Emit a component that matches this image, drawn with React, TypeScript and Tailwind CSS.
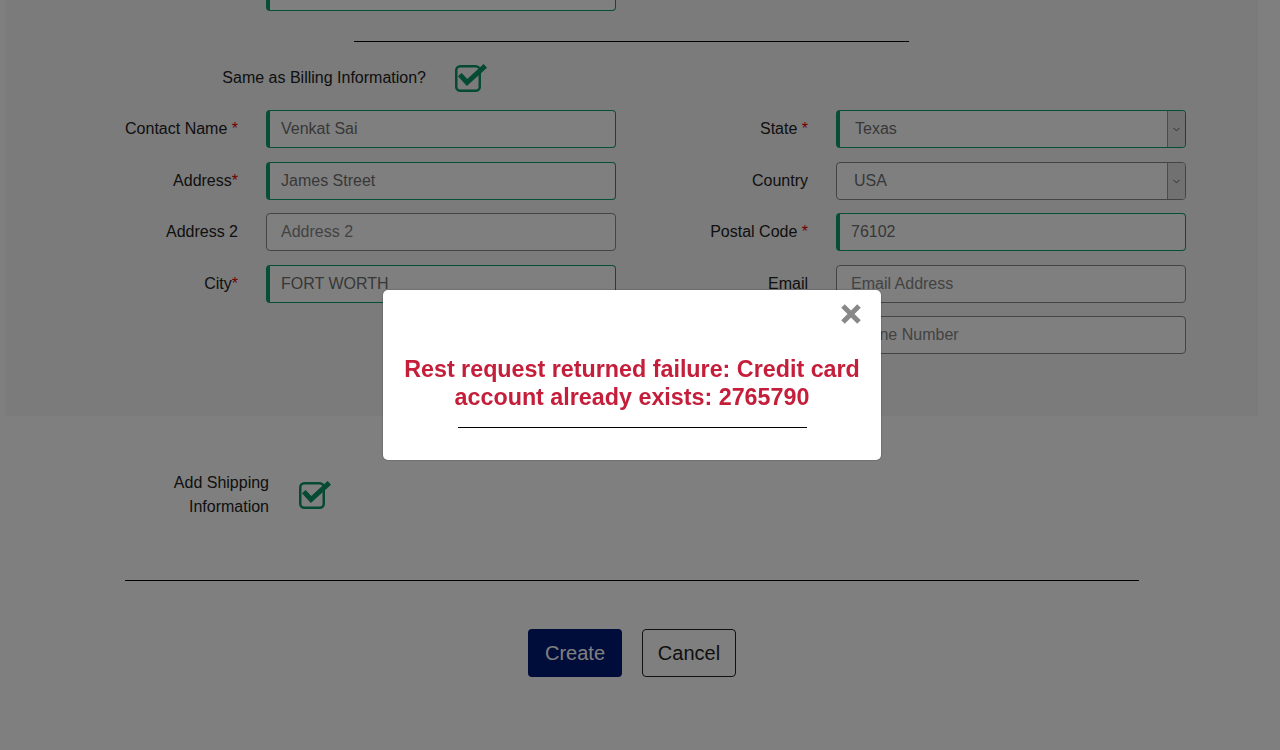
import React from "react";
import { ChevronDown } from "lucide-react";

const GREEN = "border-[#0b9e6c]";

const CheckIcon = () => (
  <svg width="32" height="28" viewBox="0 0 32 28" fill="none">
    <rect x="1.25" y="2.25" width="23.5" height="24.5" rx="4" stroke="#0a9464" strokeWidth="2.5" />
    <path d="M6.5 12.5 L12 18.5 L28.5 3.5" stroke="#0a9464" strokeWidth="5" strokeLinecap="square" />
  </svg>
);

const Star = ({ space = true }: { space?: boolean }) => (
  <span className="text-[#e00000]">{space ? " *" : "*"}</span>
);

type FieldProps = {
  label: React.ReactNode;
  value?: string;
  placeholder?: string;
  required?: boolean;
  select?: boolean;
};

const Field = ({ label, value, placeholder, required, select }: FieldProps) => {
  const pad = select ? (required ? "pl-[15px]" : "pl-[17px]") : required ? "pl-[11px]" : "pl-[14px]";
  return (
    <div className="flex items-center w-[518px]">
      <label className="w-[140px] text-right text-[16px] text-[#222] shrink-0 whitespace-nowrap">{label}</label>
      <div
        className={`ml-[28px] w-[350px] h-[38px] flex items-center rounded-[4px] border bg-white ${
          required ? `${GREEN} border-l-4` : "border-[#888]"
        }`}
      >
        <span className={`flex-1 text-[16px] ${pad} ${value ? "text-[#707070]" : "text-[#858585]"}`}>
          {value || placeholder}
        </span>
        {select && (
          <span className="w-[18px] h-full flex items-center justify-center bg-[#e2e2e2] border-l border-[#999] rounded-r-[3px]">
            <ChevronDown size={11} strokeWidth={1.6} color="#333" />
          </span>
        )}
      </div>
    </div>
  );
};

const Row = ({ left, right, className }: { left?: React.ReactNode; right: React.ReactNode; className: string }) => (
  <div className={`flex pl-[93px] gap-[52px] ${className}`}>
    {left ?? <div className="w-[518px]" />}
    {right}
  </div>
);

export default function App() {
  return (
    <div className="h-[750px] overflow-hidden bg-white font-['Liberation_Sans',Arial,sans-serif]">
      <div className="ml-[5px] mr-[22px] bg-[#f6f6f6] pb-[62px] pt-px -mt-px">
        <Row
          className="-mt-[27px]"
          left={<Field label="Shipping" value="Home Address" required />}
          right={
            <div className="w-[518px] flex items-center">
              <span className="text-[16px] text-[#222] -ml-[23px] whitespace-nowrap">Apply Shipping Policy to every billing</span>
            </div>
          }
        />
        <div className="mx-auto mt-[30px] w-[555px] h-px bg-black" />
        <div className="flex items-center justify-end mt-[22px] h-[28px] w-[482px] gap-[29px]">
          <span className="text-right text-[16px] text-[#222] whitespace-nowrap">Same as Billing Information?</span>
          <CheckIcon />
        </div>
        <Row
          className="mt-[18px]"
          left={<Field label={<>Contact Name<Star /></>} value="Venkat Sai" required />}
          right={<Field label={<>State<Star /></>} value="Texas" required select />}
        />
        <Row
          className="mt-[14px]"
          left={<Field label={<>Address<Star space={false} /></>} value="James Street" required />}
          right={<Field label="Country" value="USA" select />}
        />
        <Row
          className="mt-[13px]"
          left={<Field label="Address 2" placeholder="Address 2" />}
          right={<Field label={<>Postal Code<Star /></>} value="76102" required />}
        />
        <Row
          className="mt-[14px]"
          left={<Field label={<>City<Star space={false} /></>} value="FORT WORTH" required />}
          right={<Field label="Email" placeholder="Email Address" />}
        />
        <Row className="mt-[13px]" right={<Field label="Phone" placeholder="Phone Number" />} />
      </div>

      <div className="flex items-center mt-[55px] ml-[105px] gap-[30px]">
        <span className="w-[164px] text-right text-[16px] leading-[24px] text-[#222]">
          Add Shipping
          <br />
          Information
        </span>
        <CheckIcon />
      </div>

      <div className="ml-[125px] w-[1014px] mt-[61px]">
        <div className="h-px bg-black" />
        <div className="flex justify-center gap-[20px] mt-[48px]">
          <button className="w-[94px] h-[48px] rounded-[4px] bg-[#001874] text-white text-[20px]">Create</button>
          <button className="w-[94px] h-[48px] rounded-[4px] border border-[#222] bg-white text-[#222] text-[20px]">
            Cancel
          </button>
        </div>
      </div>

      <div className="fixed inset-0 bg-black/50" />
      <div className="fixed left-[383px] top-[290px] w-[498px] h-[170px] bg-white rounded-[5px] shadow-[0_0_2px_rgba(0,0,0,0.4)] flex flex-col items-center">
        <div className="self-stretch flex justify-end pt-[13px] pr-[19px]">
          <svg width="22" height="22" viewBox="0 0 22 22">
            <path d="M3 3 L19 19 M19 3 L3 19" stroke="#888" strokeWidth="5" />
          </svg>
        </div>
        <p className="mt-[30px] text-center text-[23.3px] leading-[28px] font-bold text-[#c41e3a] whitespace-nowrap">
          Rest request returned failure: Credit card
          <br />
          account already exists: 2765790
        </p>
        <div className="mt-[16px] w-[349px] h-px bg-black" />
      </div>
    </div>
  );
}
